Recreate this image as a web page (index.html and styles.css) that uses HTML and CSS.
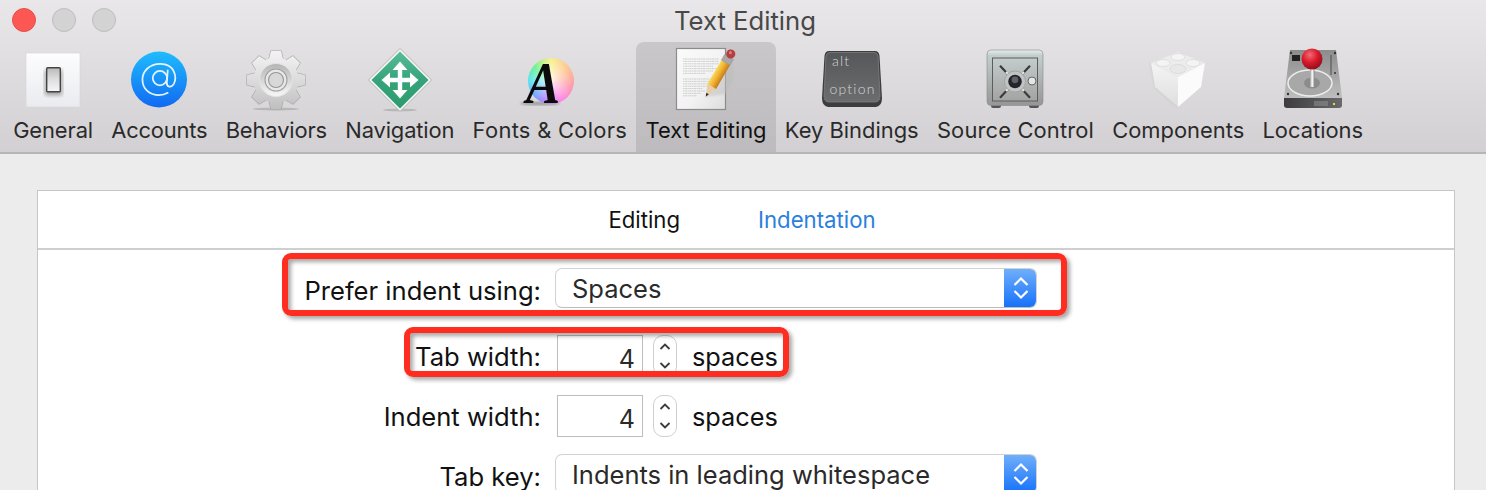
FILE: index.html
```html
<!DOCTYPE html>
<html lang="en">
<head>
<meta charset="utf-8">
<title>Text Editing</title>
<link rel="stylesheet" href="styles.css">
</head>
<body>
<div class="window">
  <header class="chrome">
    <div class="titlebar">
      <div class="lights"><span class="light red"></span><span class="light"></span><span class="light"></span></div>
      <div class="title">Text Editing</div>
      <div></div>
    </div>
    <nav class="toolbar">
      <div class="tool">
        <svg class="icon" viewBox="0 0 64 64"><defs><linearGradient id="g1" x1="0" y1="0" x2="0" y2="1"><stop offset="0" stop-color="#fdfdfe"/><stop offset="1" stop-color="#e9ebef"/></linearGradient><linearGradient id="g1b" x1="0" y1="0" x2="0" y2="1"><stop offset="0" stop-color="#b9b9b9"/><stop offset=".45" stop-color="#dcdcdc"/><stop offset="1" stop-color="#f6f6f6"/></linearGradient><filter id="b2"><feGaussianBlur stdDeviation="2"/></filter></defs>
          <rect x="5" y="5" width="54" height="54" fill="url(#g1)" stroke="#d4d4d6" stroke-width=".6"/>
          <rect x="24" y="22" width="17" height="25" fill="#999" filter="url(#b2)"/>
          <rect x="25.7" y="19.7" width="13.6" height="24" rx="1" fill="url(#g1b)" stroke="#444" stroke-width="1.4"/>
        </svg>
        <span class="tool-label ls-a">General</span>
      </div>
      <div class="tool">
        <svg class="icon" viewBox="0 0 64 64"><defs><linearGradient id="g2" x1="0" y1="0" x2="0" y2="1"><stop offset="0" stop-color="#1fbcfd"/><stop offset="1" stop-color="#1169f2"/></linearGradient></defs>
          <circle cx="32" cy="31.5" r="28" fill="url(#g2)"/>
          <g transform="translate(32 31.5) scale(.92) translate(-31.5 -31.5)">
            <circle cx="32.5" cy="30" r="7.8" fill="none" stroke="#e4f4ff" stroke-width="1.9"/>
            <path d="M41 21.5 L40 35 C39.8 40 45 40.5 47.5 36.5 C51.5 29 48.5 14.5 33 14.5 C20.5 14.5 13.5 23 13.5 31.5 C13.5 42 21.5 48.5 31.5 48.5 C35.5 48.5 38.5 47.5 41 46" fill="none" stroke="#e4f4ff" stroke-width="1.9" stroke-linecap="round"/>
          </g>
        </svg>
        <span class="tool-label ls-b">Accounts</span>
      </div>
      <div class="tool">
        <svg class="icon" viewBox="0 0 64 64"><defs><linearGradient id="g3" x1="0" y1="0" x2="0" y2="1"><stop offset="0" stop-color="#f6f6f6"/><stop offset=".5" stop-color="#dcdcdc"/><stop offset="1" stop-color="#bcbcbc"/></linearGradient><linearGradient id="g3b" x1="0" y1="0" x2="0" y2="1"><stop offset="0" stop-color="#b4b4b4"/><stop offset="1" stop-color="#f8f8f8"/></linearGradient>
          <clipPath id="gear"><circle cx="32" cy="32" r="22.5"/><path d="M27 3h10l3.2 13h-16.4z"/><path d="M27 3h10l3.2 13h-16.4z" transform="rotate(45 32 32)"/><path d="M27 3h10l3.2 13h-16.4z" transform="rotate(90 32 32)"/><path d="M27 3h10l3.2 13h-16.4z" transform="rotate(135 32 32)"/><path d="M27 3h10l3.2 13h-16.4z" transform="rotate(180 32 32)"/><path d="M27 3h10l3.2 13h-16.4z" transform="rotate(225 32 32)"/><path d="M27 3h10l3.2 13h-16.4z" transform="rotate(270 32 32)"/><path d="M27 3h10l3.2 13h-16.4z" transform="rotate(315 32 32)"/></clipPath></defs>
          <ellipse cx="32" cy="61" rx="23" ry="1.5" fill="#aaa" opacity=".7"/>
          <g fill="#a6a6a6" stroke="#a6a6a6" stroke-width="1.2" stroke-linejoin="round">
            <path d="M27 3h10l3.2 13h-16.4z"/><path d="M27 3h10l3.2 13h-16.4z" transform="rotate(45 32 32)"/><path d="M27 3h10l3.2 13h-16.4z" transform="rotate(90 32 32)"/><path d="M27 3h10l3.2 13h-16.4z" transform="rotate(135 32 32)"/><path d="M27 3h10l3.2 13h-16.4z" transform="rotate(180 32 32)"/><path d="M27 3h10l3.2 13h-16.4z" transform="rotate(225 32 32)"/><path d="M27 3h10l3.2 13h-16.4z" transform="rotate(270 32 32)"/><path d="M27 3h10l3.2 13h-16.4z" transform="rotate(315 32 32)"/>
          </g>
          <rect x="0" y="0" width="64" height="64" fill="url(#g3)" clip-path="url(#gear)"/>
          <circle cx="32" cy="32" r="16.5" fill="url(#g3b)" stroke="#e4e4e4"/>
          <circle cx="32" cy="32" r="11" fill="#e8e8e8" stroke="#a0a0a0" stroke-width="1.1"/>
          <circle cx="32" cy="32" r="7.5" fill="#d8d8d8" stroke="#969696" stroke-width="1.1"/>
        </svg>
        <span class="tool-label ls-c">Behaviors</span>
      </div>
      <div class="tool">
        <svg class="icon" viewBox="0 0 64 64"><defs><linearGradient id="g4" x1="0" y1="0" x2="0" y2="1"><stop offset="0" stop-color="#58bd96"/><stop offset=".5" stop-color="#36a47a"/><stop offset="1" stop-color="#2d9a6f"/></linearGradient></defs>
          <ellipse cx="32" cy="62" rx="17" ry="1.3" fill="#aaa" opacity=".7"/>
          <path d="M32 0.5 L63.5 32 L32 63.5 L0.5 32Z" fill="#f3f3f3" stroke="#a8a8a8" stroke-width=".8" stroke-linejoin="round"/>
          <path d="M32 3.5 L60.5 32 L32 60.500 L3.500 32Z" fill="url(#g4)"/>
          <path d="M32 13.5 L39.5 22 H34.2 V29.8 H42 V24.5 L50.5 32 L42 39.5 V34.2 H34.2 V42 H39.5 L32 50.5 L24.5 42 H29.8 V34.2 H22 V39.5 L13.5 32 L22 24.5 V29.8 H29.8 V22 H24.5Z" fill="#fff"/>
        </svg>
        <span class="tool-label ls-c">Navigation</span>
      </div>
      <div class="tool">
        <svg class="icon" viewBox="0 0 64 64"><defs><filter id="b1"><feGaussianBlur stdDeviation="1"/></filter></defs>
          <ellipse cx="22" cy="55.5" rx="20" ry="2" fill="#777" opacity=".55" filter="url(#b1)"/>
          <foreignObject x="10" y="10" width="46" height="46"><div class="wheel"></div></foreignObject>
          <text class="glyph-a" transform="translate(8 55) scale(.85 1)">A</text>
        </svg>
        <span class="tool-label ls-d">Fonts &amp; Colors</span>
      </div>
      <div class="tool selected">
        <svg class="icon" viewBox="0 0 64 64"><defs><linearGradient id="g6" x1="0" y1="0" x2="1" y2="1"><stop offset="0" stop-color="#fbfbfb"/><stop offset=".6" stop-color="#f2f2f2"/><stop offset="1" stop-color="#dcdcdc"/></linearGradient><linearGradient id="g6p" x1="0" y1="0" x2="1" y2="0"><stop offset="0" stop-color="#f8da62"/><stop offset=".5" stop-color="#f0b02c"/><stop offset="1" stop-color="#c47a1e"/></linearGradient></defs>
          <rect x="2.5" y="0.5" width="49" height="61" fill="url(#g6)" stroke="#8b8b8b" stroke-width="1.2"/>
          <path d="M9 11h36M9 13.4h36M9 15.8h36M9 18.2h30M9 20.6h36M9 23h30M9 25.4h22M9 31h36M9 33.4h32M9 35.8h28M9 38.2h24M9 40.6h20M9 43h22M9 45.4h18M9 47.8h14" stroke="#b4b4b4" stroke-width=".6" stroke-dasharray="1.300 .5 2.200 .5" fill="none"/>
          <path d="M32 49 L58 8 L60 30 L52 46Z" fill="#bdbdbd" opacity=".5" filter="url(#b1)"/>
          <g transform="translate(31.7 48.7) rotate(30.4)">
            <path d="M0 0 L-5 -12 H5Z" fill="#e9cda6"/>
            <path d="M0 0 L-1.5 -3.7 H1.5Z" fill="#2f2f2f"/>
            <rect x="-5" y="-40" width="10" height="28" fill="url(#g6p)"/>
            <rect x="-5" y="-46" width="10" height="6.5" fill="#a9a9a9" stroke="#8a8a8a" stroke-width=".4"/>
            <circle cx="0" cy="-49.500" r="4.6" fill="#b5403f"/>
            <circle cx="-1" cy="-50.5" r="1.5" fill="#d9807c"/>
          </g>
        </svg>
        <span class="tool-label">Text Editing</span>
      </div>
      <div class="tool">
        <svg class="icon" viewBox="0 0 64 64"><defs><linearGradient id="g7" x1="0" y1="0" x2="0" y2="1"><stop offset="0" stop-color="#56575a"/><stop offset="1" stop-color="#6c6d6e"/></linearGradient></defs>
          <path d="M9 3 H55 Q59 3 59.5 8 L62 50 Q62 58 56 59 H8 Q2 58 2 50 L4.5 8 Q5 3 9 3Z" fill="#3d3d3e"/>
          <path d="M10 4.5 H54 Q57.5 4.5 58 8 L60 48 Q60 54 55 54 H9 Q4 54 4 48 L6 8 Q6.5 4.5 10 4.5Z" fill="url(#g7)" stroke="#7c7d7e" stroke-width=".8"/>
          <text class="key-text" x="12" y="18">alt</text>
          <text class="key-text" x="9.5" y="46">option</text>
        </svg>
        <span class="tool-label">Key Bindings</span>
      </div>
      <div class="tool">
        <svg class="icon" viewBox="0 0 64 64"><defs><linearGradient id="g8" x1="0" y1="0" x2="0" y2="1"><stop offset="0" stop-color="#e6eeed"/><stop offset=".1" stop-color="#c2cecc"/><stop offset="1" stop-color="#969696"/></linearGradient><linearGradient id="g8b" x1="0" y1="0" x2="0" y2="1"><stop offset="0" stop-color="#c2cdcb"/><stop offset="1" stop-color="#a3a3a3"/></linearGradient></defs>
          <rect x="8" y="55" width="10" height="5" rx="2" fill="#555"/>
          <rect x="46" y="55" width="10" height="5" rx="2" fill="#555"/>
          <rect x="4" y="2" width="56" height="55.500" rx="4" fill="url(#g8)" stroke="#8b8b8b" stroke-width=".6"/>
          <rect x="9.5" y="10" width="45" height="43" fill="url(#g8b)" stroke="#5c5c5c" stroke-width="1"/>
          <path d="M17 17.700 L47 49.700M47 17.700 L17 49.700" stroke="#3a3a3a" stroke-width="2.200"/>
          <path d="M23 24 L26 27M41 24 L38 27M25.500 40.500 L23 43M38.500 40.500 L41 43" stroke="#e8e8e8" stroke-width="2.200"/>
          <circle cx="32" cy="33.500" r="10.500" fill="#c2c4c4" stroke="#a4a4a4"/>
          <circle cx="32" cy="33.500" r="6.800" fill="#23252a"/>
          <circle cx="32" cy="31.800" r="3.400" fill="#5f6268"/>
          <circle cx="49" cy="33" r="4" fill="#e6e6e6" stroke="#666" stroke-width="1"/>
        </svg>
        <span class="tool-label ls-e">Source Control</span>
      </div>
      <div class="tool">
        <svg class="icon" viewBox="0 0 64 64"><defs><linearGradient id="g9" x1="0" y1="0" x2="0" y2="1"><stop offset="0" stop-color="#f4f4f4"/><stop offset="1" stop-color="#dedede"/></linearGradient></defs>
          <path d="M4 15 L32 30 V60 L9 40Z" fill="#b9b9b9" opacity=".4" filter="url(#b1)"/>
          <path d="M5 15 L32 4 L59 15 L32 29Z" fill="#ececec"/>
          <path d="M5 15 L32 29 V59 L9 39Z" fill="url(#g9)"/>
          <path d="M59 15 L32 29 V59 L55 39Z" fill="#fbfbfb"/>
          <ellipse cx="32" cy="9" rx="7" ry="3.5" fill="#f4f4f4" stroke="#d4d4d4" stroke-width=".6"/>
          <ellipse cx="17" cy="15" rx="7" ry="3.5" fill="#f4f4f4" stroke="#d4d4d4" stroke-width=".6"/>
          <ellipse cx="47" cy="15" rx="7" ry="3.5" fill="#f4f4f4" stroke="#d4d4d4" stroke-width=".6"/>
          <ellipse cx="32" cy="21" rx="8" ry="4.5" fill="#e8e8e8" stroke="#d4d4d4" stroke-width=".6"/>
        </svg>
        <span class="tool-label">Components</span>
      </div>
      <div class="tool">
        <svg class="icon" viewBox="0 0 64 64"><defs><linearGradient id="g10" x1="0" y1="0" x2="0" y2="1"><stop offset="0" stop-color="#8c8c8c"/><stop offset="1" stop-color="#c8c8c8"/></linearGradient><radialGradient id="g10r" cx=".4" cy=".3" r=".75"><stop offset="0" stop-color="#f56a74"/><stop offset=".5" stop-color="#d81a2c"/><stop offset="1" stop-color="#8a0d18"/></radialGradient><linearGradient id="g10s" x1="0" y1="0" x2="1" y2="0"><stop offset="0" stop-color="#9a9a9a"/><stop offset=".5" stop-color="#fff"/><stop offset="1" stop-color="#8f8f8f"/></linearGradient><linearGradient id="g10f" x1="0" y1="0" x2="1" y2="0"><stop offset="0" stop-color="#3c3c3e"/><stop offset="1" stop-color="#6a6a6c"/></linearGradient></defs>
          <path d="M9 2 H55 L61 50 V58 Q60.500 60 58 60 H6 Q3.500 60 3 58 V50Z" fill="url(#g10)"/>
          <path d="M3 50 H61 V58 Q60.500 60 58 60 H6 Q3.500 60 3 58Z" fill="url(#g10f)"/>
          <ellipse cx="29" cy="35" rx="22" ry="13" fill="#a8a8a8" stroke="#ededed" stroke-width="1.500"/>
          <ellipse cx="31" cy="35" rx="8" ry="5.500" fill="#8c8c8c"/>
          <rect x="29" y="20" width="4.500" height="19" fill="url(#g10s)"/>
          <circle cx="31" cy="11" r="10.500" fill="url(#g10r)"/>
          <path d="M50 7 V27" fill="none" stroke="#4c4c4c" stroke-width="1"/>
          <rect x="11" y="7" width="8" height="6" fill="#222"/>
          <circle cx="10" cy="5" r="1.200" fill="#333"/><circle cx="54" cy="5" r="1.200" fill="#333"/><circle cx="7" cy="46" r="1.200" fill="#333"/><circle cx="57" cy="46" r="1.200" fill="#333"/><circle cx="54" cy="25" r="1" fill="#333"/>
          <path d="M34 53v5M36 53v5M38 53v5M40 53v5M42 53v5M44 53v5M46 53v5" stroke="#9a9a9a" stroke-width=".9"/>
          <rect x="52" y="55" width="2" height="2" fill="#e4dc3a"/>
        </svg>
        <span class="tool-label">Locations</span>
      </div>
    </nav>
  </header>
  <main class="content">
    <section class="panel">
      <div class="tabs"><span class="tab">Editing</span><span class="tab active">Indentation</span></div>
      <div class="form">
        <div class="row row-first">
          <span class="annot annot-wide"></span>
          <label class="label">Prefer indent using:</label>
          <div class="select"><span class="select-text">Spaces</span><span class="select-btn"><svg class="chev" viewBox="0 0 16 26"><path d="M1.5 10 L8 3.5 L14.5 10M1.5 16 L8 22.5 L14.5 16" fill="none" stroke="#fff" stroke-width="2.2"/></svg></span></div>
        </div>
        <div class="row row-second">
          <span class="annot annot-narrow"></span>
          <label class="label">Tab width:</label>
          <div class="field">4</div>
          <div class="stepper"><svg class="chev-dark" viewBox="0 0 12 30"><path d="M1.5 8 L6 3.5 L10.5 8M1.5 22 L6 26.5 L10.5 22" fill="none" stroke="#3c3c3c" stroke-width="1.8"/></svg></div>
          <span class="unit">spaces</span>
        </div>
        <div class="row row-third">
          <label class="label">Indent width:</label>
          <div class="field">4</div>
          <div class="stepper"><svg class="chev-dark" viewBox="0 0 12 30"><path d="M1.5 8 L6 3.5 L10.5 8M1.5 22 L6 26.5 L10.5 22" fill="none" stroke="#3c3c3c" stroke-width="1.8"/></svg></div>
          <span class="unit">spaces</span>
        </div>
        <div class="row row-fourth">
          <label class="label">Tab key:</label>
          <div class="select"><span class="select-text">Indents in leading whitespace</span><span class="select-btn"><svg class="chev" viewBox="0 0 16 26"><path d="M1.5 10 L8 3.5 L14.5 10M1.5 16 L8 22.5 L14.5 16" fill="none" stroke="#fff" stroke-width="2.2"/></svg></span></div>
        </div>
      </div>
    </section>
  </main>
</div>
</body>
</html>
```
FILE: styles.css
```css
* { box-sizing: border-box; }
html, body { margin: 0; padding: 0; height: 490px; overflow: hidden; }
body { font-family: Inter, "Noto Sans", sans-serif; color: #1f1f1f; background: #ececec; }
.window { height: 490px; overflow: hidden; display: flex; flex-direction: column; }
.chrome { height: 154px; flex: none; background: linear-gradient(#e9e7e9, #d2d0d2); border-bottom: 2px solid #b6b6b6; }
.titlebar { height: 42px; display: grid; grid-template-columns: 1fr auto 1fr; align-items: center; }
.lights { display: flex; gap: 16px; padding-left: 12px; margin-top: -2px; }
.light { width: 24px; height: 24px; border-radius: 50%; background: #d3d3d3; border: 1px solid #bdbdbd; }
.light.red { background: #fc5753; border-color: #e5504c; }
.title { font-size: 25.7px; color: #484848; padding-left: 4px; margin-top: -2px; }
.toolbar { display: flex; height: 110px; padding-left: 4px; }
.tool { padding: 6px 9.15px 0; display: flex; flex-direction: column; align-items: center; border-radius: 8px 8px 0 0; }
.tool.selected { background: linear-gradient(#c9c7c9, #bdbbbd); }
.icon { width: 64px; height: 64px; flex: none; overflow: visible; }
.tool-label { font-size: 21.9px; line-height: 28px; margin-top: 4px; white-space: nowrap; color: #2a2a2a; }
.ls-a { letter-spacing: -.1px; }
.ls-b { letter-spacing: -.2px; }
.ls-c { letter-spacing: -.13px; }
.ls-d { letter-spacing: .3px; }
.ls-e { letter-spacing: .15px; }
.selected .tool-label { color: #111; }
.wheel { width: 46px; height: 46px; border-radius: 50%; background: radial-gradient(circle, rgba(255,255,255,.85), rgba(255,255,255,.1) 72%), conic-gradient(#f8ee7a 0deg, #ffb27a 60deg, #ff8a9a 100deg, #ff70e0 150deg, #a070ff 200deg, #50a0ff 235deg, #40e0f0 270deg, #50f080 310deg, #c0f070 340deg, #f8ee7a 360deg); }
.glyph-a { font-family: "Liberation Serif", serif; font-style: italic; font-weight: 700; font-size: 60px; fill: #0b0b0b; }
.key-text { font-family: Lato, sans-serif; font-weight: 300; font-size: 14px; letter-spacing: 1.2px; fill: #d6d6d6; }
.content { flex: 1; padding: 36px 31px 0 37px; min-height: 0; }
.panel { background: #fff; border: 1px solid #c6c6c6; border-bottom: 0; height: 320px; overflow: hidden; }
.tabs { height: 59px; display: flex; justify-content: center; gap: 78px; align-items: center; border-bottom: 2px solid #cfcfcf; padding-right: 8px; font-size: 22.2px; }
.tab { color: #111; }
.tab.active { color: #2a80dc; }
.form { display: flex; flex-direction: column; }
.row { display: flex; align-items: center; position: relative; padding-left: 517px; }
.row-first { height: 40px; margin-top: 18px; }
.row-second { height: 42px; margin-top: 27px; }
.row-third { height: 42px; margin-top: 18px; }
.row-fourth { height: 40px; margin-top: 17px; flex: none; }
.label { position: absolute; right: calc(100% - 503px); white-space: nowrap; font-size: 25.6px; color: #111; }
.row-first .label, .row-fourth .label { margin-top: 4px; }
.select { width: 482px; height: 40px; background: #fff; border: 1px solid #d2d2d2; border-bottom-color: #bdbdbd; border-radius: 7px; display: flex; align-items: center; justify-content: space-between; overflow: hidden; flex: none; }
.select-text { padding-left: 16px; font-size: 25.5px; color: #2a2a2a; line-height: 40px; margin-top: 1px; }
.select-btn { width: 33px; height: 40px; margin: -1px -1px -1px 0; background: linear-gradient(#72b0fb, #1470fa); display: flex; align-items: center; justify-content: center; }
.chev { width: 16px; height: 26px; }
.field { width: 86px; height: 42px; margin-left: 2px; border: 1px solid #bdbdbd; text-align: right; font-size: 25px; line-height: 46px; padding-right: 7px; color: #2a2a2a; flex: none; }
.stepper { width: 24px; height: 42px; margin-left: 10px; border: 1px solid #cfcfcf; border-radius: 10px; display: flex; align-items: center; justify-content: center; flex: none; background: #fff; }
.chev-dark { width: 12px; height: 30px; }
.unit { margin-left: 15px; font-size: 25.3px; color: #111; }
.annot { position: absolute; border: 6px solid #ff2d1f; border-radius: 9px; z-index: 2; box-shadow: 3px 3px 4px rgba(0,0,0,.35), inset 3px 3px 4px rgba(0,0,0,.35); }
.annot-wide { left: 244px; top: -15px; width: 785px; height: 63px; }
.annot-narrow { left: 366px; top: -8px; width: 385px; height: 50px; }
```
